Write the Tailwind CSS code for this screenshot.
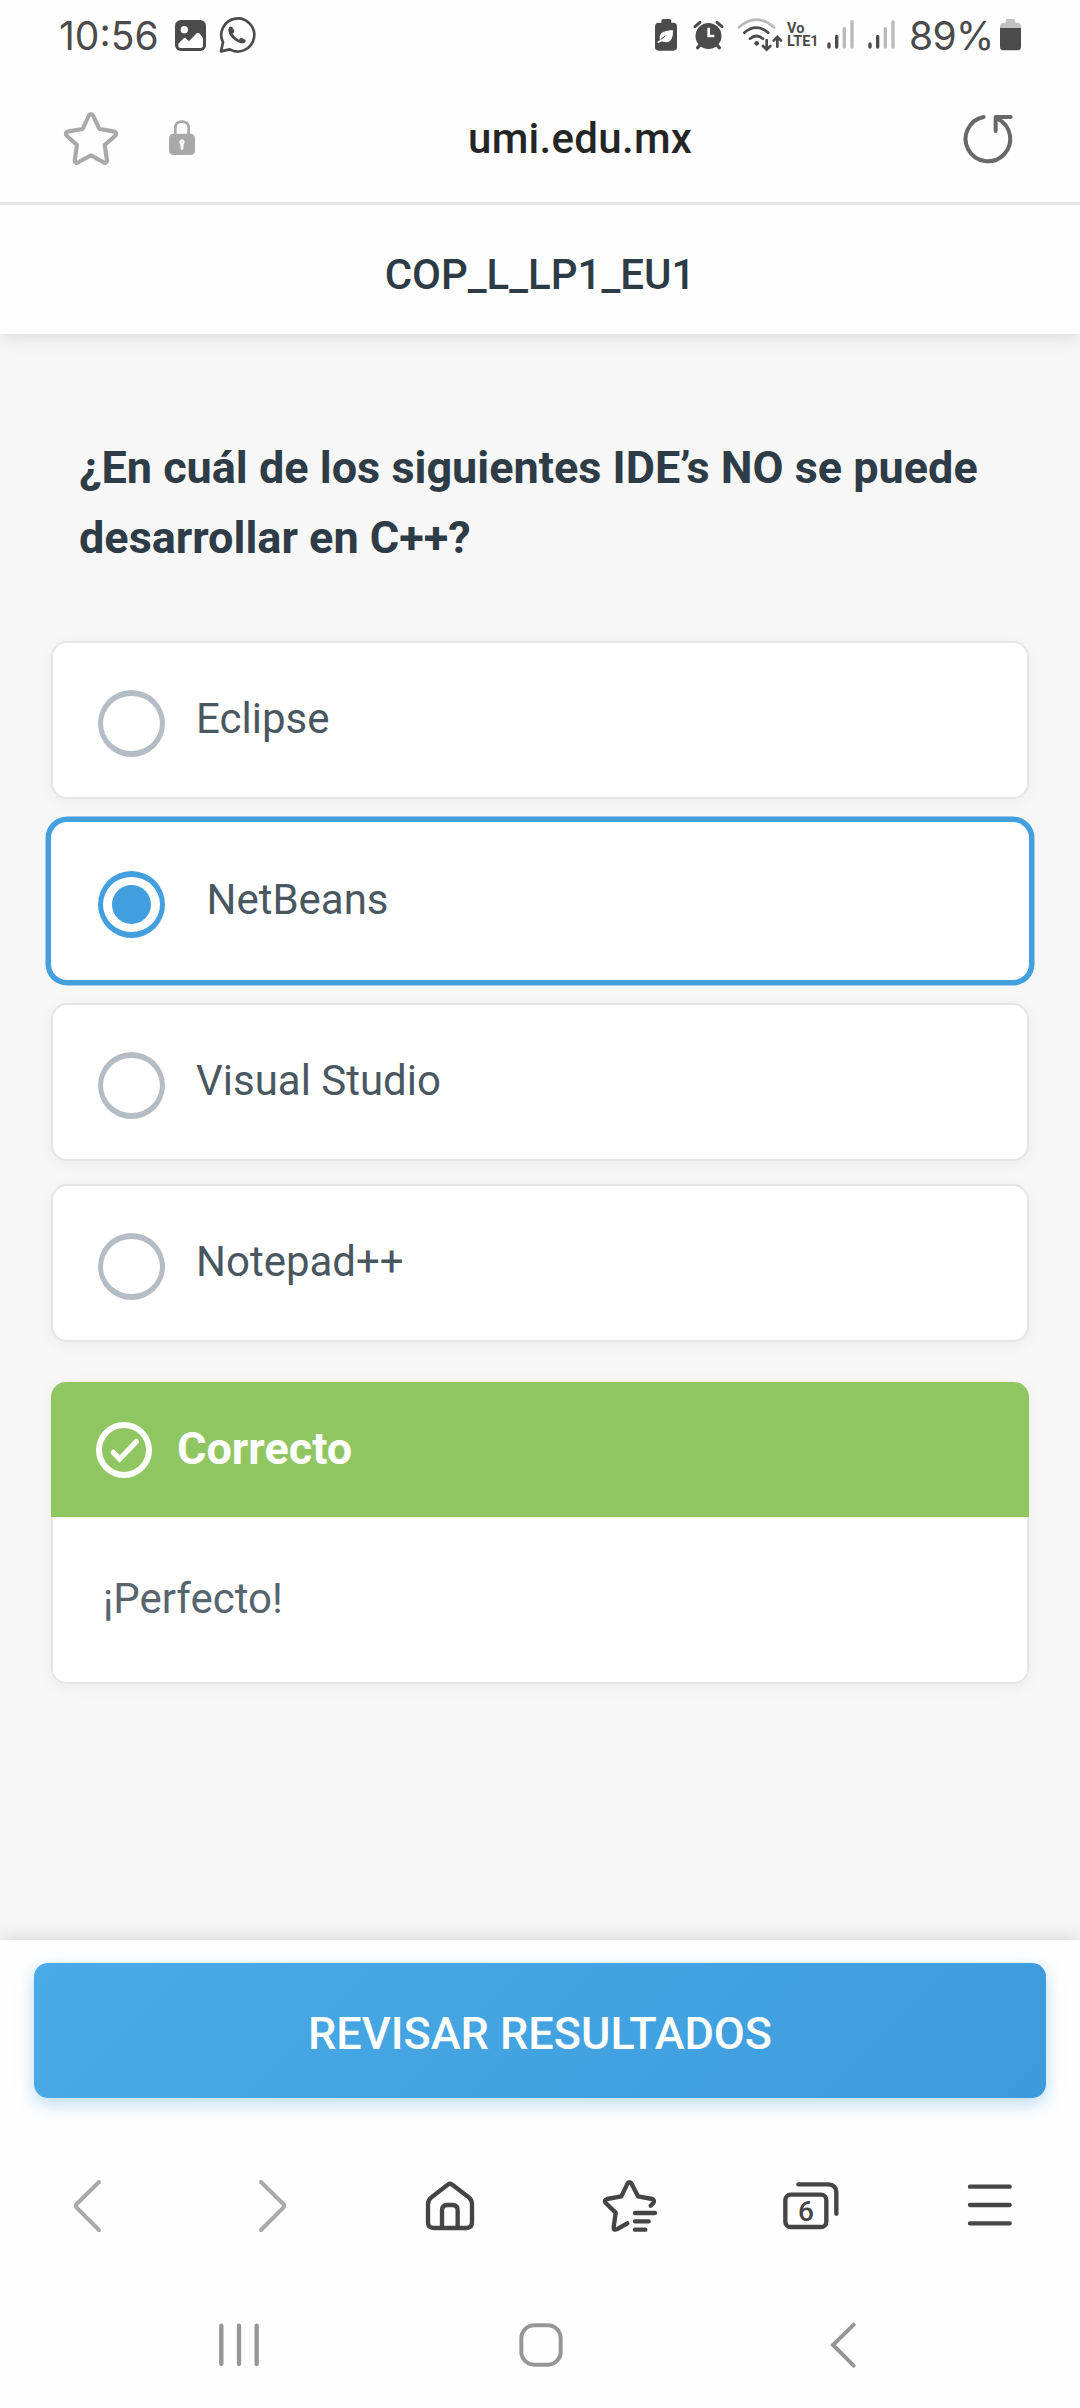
<!DOCTYPE html>
<html lang="es">
<head>
<meta charset="utf-8">
<meta name="viewport" content="width=device-width">
<title>COP_L_LP1_EU1</title>
<script src="https://cdn.jsdelivr.net/npm/@tailwindcss/browser@4"></script>
</head>
<body class="flex h-[2408px] w-[1080px] flex-col overflow-hidden bg-[#fefefe] font-[Roboto,sans-serif]">

<!-- Status bar -->
<div class="flex h-[70px] shrink-0 items-center bg-[#fefefe] pl-[58px] text-[#4b4b4b]">
  <span class="w-[115px] whitespace-nowrap pl-px font-[Inter,sans-serif] text-[39px] leading-none">10:56</span>
  <svg class="h-[40px] w-[36px]" viewBox="399 45 108 120"><rect x="405" y="60" width="93" height="93" rx="17" fill="#4b4b4b"/><circle cx="433" cy="89" r="11" fill="#fff"/><path d="M415 131 L431 115 Q434 112 437 115 L447 124 L470 100 Q474 96 478 100 L489 114 V138 Q489 144 482 144 H422 Q415 144 415 138Z" fill="#fff"/></svg>
  <svg class="ml-[9px] h-[40px] w-[40px]" viewBox="534 47 120 120"><path d="M543 156 L549 129 A49.500 49.500 0 1 1 569 150 Z" fill="none" stroke="#4b4b4b" stroke-width="8" stroke-linejoin="round"/><path d="M567 84 Q573 78 578 85 L583 94 Q584 98 578 103 Q584 115 597 121 Q602 114 606 116 L615 121 Q620 124 614 130 Q606 134 594 129 Q572 118 566 99 Q564 90 567 84Z" fill="#4b4b4b"/></svg>
  <div class="ml-auto flex items-center">
    <svg class="h-[40px] w-[24px]" viewBox="72 45 72 120"><path d="M94 62 Q94 57 100 57 H118 Q124 57 124 62 V68 H130 Q141 68 141 80 V142 Q141 152 130 152 H86 Q75 152 75 142 V80 Q75 68 86 68 H94Z" fill="#4b4b4b"/><path d="M129 91 C105 91 88 97 89 115 L90 120 Q97 110 110 105 Q99 117 82 125 L84 129 Q91 128 96 124 Q116 132 125 116 Q130 105 129 91Z" fill="#fff"/></svg>
    <svg class="ml-[14px] h-[40px] w-[32px]" viewBox="186 45 96 120"><circle cx="235.500" cy="108" r="39" fill="#4b4b4b"/><path d="M195 80 L210 67 M276 80 L261 67" stroke="#4b4b4b" stroke-width="9" stroke-linecap="round"/><path d="M203 143 L213 132 M268 143 L258 132" stroke="#4b4b4b" stroke-width="10" stroke-linecap="round"/><path d="M236 83 V108 H253" fill="none" stroke="#fff" stroke-width="8"/></svg>
    <svg class="ml-[12px] h-[40px] w-[48px]" viewBox="318 45 144 120" fill="none" stroke="#4b4b4b" stroke-width="8" stroke-linecap="round"><path d="M327 82 Q379 36 432 82" stroke="#b9b9b9"/><path d="M343 98 Q379 68 415 98"/><path d="M360 116 Q379 100 399 116"/><circle cx="380" cy="130" r="7" fill="#4b4b4b" stroke="none"/><path d="M410 120 V148 M399 138 L410 149 L421 138 M442 140 V112 M431 122 L442 111 L453 122" stroke-width="8"/></svg>
    <div class="ml-[3px] w-[33px] whitespace-nowrap text-[14.500px] font-bold leading-[13px]">Vo<br>LTE1</div>
    <svg class="ml-[6px] h-[40px] w-[30px]" viewBox="588 45 90 120" stroke-width="10" stroke-linecap="round"><path d="M597 132 V141 M620 109 V141" stroke="#4b4b4b"/><path d="M643 86 V141 M666 65 V141" stroke="#b9b9b9"/></svg>
    <svg class="ml-[11px] h-[40px] w-[30px]" viewBox="711 45 90 120" stroke-width="10" stroke-linecap="round"><path d="M720 132 V141 M743 109 V141" stroke="#4b4b4b"/><path d="M766 86 V141 M789 65 V141" stroke="#b9b9b9"/></svg>
    <span class="ml-[12px] w-[90px] whitespace-nowrap font-[Inter,sans-serif] text-[39px] leading-none tracking-[-0.600px]">89%</span>
    <svg class="mr-[57px] h-[40px] w-[24px]" viewBox="1107 45 72 120"><path d="M1127 63 Q1127 57 1132 57 H1150 Q1156 57 1156 63 V68 H1162 Q1173 68 1173 80 V84 H1110 V80 Q1110 68 1121 68 H1127Z" fill="#c1c1c1"/><path d="M1110 84 H1173 V140 Q1173 151 1162 151 H1121 Q1110 151 1110 140Z" fill="#4b4b4b"/></svg>
  </div>
</div>

<!-- Address bar -->
<div class="z-20 flex h-[135px] shrink-0 items-center border-b-3 border-[#e6e6e6] bg-[#fefefe] px-[61px] pt-[5px]">
  <svg class="h-[60px] w-[60px]" viewBox="63 325 180 180" fill="none" stroke="#a9a9a9" stroke-width="12.500" stroke-linejoin="round"><path d="M146 346 Q153 334 160 346 L178 385 L220 392 Q234 396 225 406 L194 433 L201 480 Q200 491 189 484 L153 464 L116 484 Q105 491 104 480 L111 433 L81 406 Q72 396 86 392 L128 385 Z"/></svg>
  <svg class="ml-[46px] h-[40px] w-[30px]" viewBox="381 358 90 120"><path d="M406 405 V385 Q406 366 426 366 Q446 366 446 385 V405" fill="none" stroke="#a9a9a9" stroke-width="8"/><rect x="387" y="402" width="78" height="64" rx="13" fill="#a9a9a9"/><path d="M426 419 a8.500 8.500 0 0 1 5 15 L430 448 Q426 454 422 448 L421 434 A8.500 8.500 0 0 1 426 419Z" fill="#fff"/></svg>
  <span class="flex-1 whitespace-nowrap pl-[271px] text-[42px] font-medium leading-none tracking-[0.300px] text-[#252525]">umi.edu.mx</span>
  <svg class="h-[60px] w-[60px]" viewBox="988 324 180 180" fill="none" stroke="#686868" stroke-width="12" stroke-linecap="round" stroke-linejoin="round"><path d="M1062 348 A67 67 0 1 0 1105 354"/><path d="M1098 390 V348 H1143"/></svg>
</div>

<!-- Quiz title -->
<header class="z-10 flex h-[129px] shrink-0 items-center justify-center bg-[#fefefe] pt-[10px] text-[42px] font-medium leading-none text-[#2c3b45] shadow-[0_3px_18px_rgba(0,0,0,0.12)]">COP_L_LP1_EU1</header>

<!-- Question -->
<main class="flex h-[1606px] shrink-0 flex-col bg-[#f7f7f7] px-[51px] pt-[99px] text-[42px] text-[#495761]">
  <h1 class="h-[208px] whitespace-nowrap pl-[28px] text-[45px] font-bold leading-[70px] text-[#2d3c46]">¿En cuál de los siguientes IDE’s NO se puede<br>desarrollar en C++?</h1>

  <div class="flex flex-col gap-[23px]">
    <label class="flex h-[158px] items-center rounded-[16px] border-2 border-[#e5e5e5] bg-white pl-[45px] shadow-[0_3px_15px_rgba(0,0,0,0.05)]">
      <span class="mt-[6px] size-[67px] rounded-full border-x-5 border-y-6 border-[#b4bdc5]"></span>
      <span class="ml-[31px] pb-[2px] leading-[50px]">Eclipse</span>
    </label>
    <label class="flex h-[158px] items-center rounded-[16px] bg-white pl-[47px] shadow-[0_0_0_5.500px_#439fde]">
      <span class="mt-[6px] flex size-[67px] items-center justify-center rounded-full border-x-5 border-y-6 border-[#439fde]"><span class="size-[39px] rounded-full bg-[#419fe0]"></span></span>
      <span class="ml-[31px] whitespace-pre pb-[2px] leading-[50px]"> NetBeans</span>
    </label>
    <label class="flex h-[158px] items-center rounded-[16px] border-2 border-[#e5e5e5] bg-white pl-[45px] shadow-[0_3px_15px_rgba(0,0,0,0.05)]">
      <span class="mt-[6px] size-[67px] rounded-full border-x-5 border-y-6 border-[#b4bdc5]"></span>
      <span class="ml-[31px] pb-[2px] leading-[50px]">Visual Studio</span>
    </label>
    <label class="flex h-[158px] items-center rounded-[16px] border-2 border-[#e5e5e5] bg-white pl-[45px] shadow-[0_3px_15px_rgba(0,0,0,0.05)]">
      <span class="mt-[6px] size-[67px] rounded-full border-x-5 border-y-6 border-[#b4bdc5]"></span>
      <span class="ml-[31px] pb-[2px] leading-[50px]">Notepad++</span>
    </label>
  </div>

  <section class="mt-[40px] flex h-[302px] flex-col overflow-hidden rounded-[15px] shadow-[0_3px_15px_rgba(0,0,0,0.05)]">
    <div class="flex h-[135px] items-center bg-[#8fc661] pl-[43px] text-[45px] font-bold leading-none text-white">
      <svg class="h-[60px] w-[60px]" viewBox="192 180 180 180" fill="none" stroke="#fff"><circle cx="282" cy="270" r="75" stroke-width="18"/><path d="M250 277 L269 297 L319 245" stroke-width="16" stroke-linecap="round"/></svg>
      <span class="ml-[23px] pb-[2px]">Correcto</span>
    </div>
    <div class="flex flex-1 items-center rounded-b-[15px] border-x-2 border-b-2 border-[#e5e5e5] bg-white pb-[2px] pl-[50px] leading-none text-[#57656f]">¡Perfecto!</div>
  </section>
</main>

<!-- Submit -->
<footer class="z-10 flex h-[180px] shrink-0 flex-col bg-[#fefefe] px-[34px] pt-[23px] shadow-[0_-3px_18px_rgba(0,0,0,0.12)]">
  <button class="h-[135px] rounded-[14px] bg-linear-[135deg,#4aabe8,#3d9bdb] pt-[5px] text-[45px] font-medium leading-none text-white shadow-[0_6px_18px_rgba(67,159,222,0.35)]">REVISAR RESULTADOS</button>
</footer>

<!-- Browser toolbar -->
<nav class="z-20 grid h-[172px] shrink-0 grid-cols-6 items-center justify-items-center bg-[#fefefe]">
  <svg class="h-[60px] w-[60px]" viewBox="60 78 180 180" fill="none" stroke="#a9a9a9" stroke-width="12" stroke-linecap="round"><path d="M177 96 L110 162 Q105 167 110 173 L177 240"/></svg>
  <svg class="h-[60px] w-[60px]" viewBox="600 78 180 180" fill="none" stroke="#a9a9a9" stroke-width="12" stroke-linecap="round"><path d="M663 96 L730 162 Q735 167 730 173 L663 240"/></svg>
  <svg class="h-[60px] w-[60px]" viewBox="1140 78 180 180" fill="none" stroke="#454545" stroke-width="13"><path d="M1223 104 Q1230 99 1237 104 L1286 142 Q1296 150 1296 162 V217 Q1296 234 1279 234 H1181 Q1164 234 1164 217 V162 Q1164 150 1174 142Z"/><path d="M1206 233 V181 Q1206 165 1222 165 H1237 Q1253 165 1253 181 V233"/></svg>
  <svg class="h-[60px] w-[60px]" viewBox="180 78 180 180" fill="none" stroke="#454545" stroke-width="13" stroke-linecap="round" stroke-linejoin="round"><path d="M262 220 L232 237 Q220 242 221 232 L227 188 L197 159 Q191 150 201 147 L244 139 L263 100 Q268 93 274 100 L294 139 L337 147 Q345 151 340 159 L332 167"/><path d="M285 189 H345 M285 214 H326 M285 239 H316"/></svg>
  <svg class="h-[60px] w-[60px]" viewBox="720 78 180 180" fill="none" stroke="#454545" stroke-width="13" stroke-linecap="round"><rect x="736" y="134" width="123" height="97" rx="16"/><path d="M775 103 H866 Q889 105 889 127 V191"/><text x="798" y="213" text-anchor="middle" font-size="84" font-weight="500" fill="#454545" stroke="none">6</text></svg>
  <svg class="h-[60px] w-[60px]" viewBox="1260 78 180 180" fill="none" stroke="#454545" stroke-width="13" stroke-linecap="round"><path d="M1290 110 H1409 M1290 165 H1409 M1290 220 H1409"/></svg>
</nav>

<!-- System navigation -->
<nav class="z-20 grid flex-1 grid-cols-[302px_302px_302px] items-start justify-items-center bg-[#fefefe] pl-[88px] pt-[23px]">
  <svg class="h-[60px] w-[60px]" viewBox="507 495 180 180" stroke="#969696" stroke-width="13" stroke-linecap="round"><path d="M544 527 V642 M597 527 V642 M650 527 V642"/></svg>
  <svg class="h-[60px] w-[60px]" viewBox="-87 495 180 180" fill="none" stroke="#969696" stroke-width="12"><rect x="-56" y="526" width="118" height="118" rx="39"/></svg>
  <svg class="h-[60px] w-[60px]" viewBox="819 495 180 180" fill="none" stroke="#969696" stroke-width="12" stroke-linecap="round"><path d="M941 524 L879 585 L941 647"/></svg>
</nav>
</body>
</html>
